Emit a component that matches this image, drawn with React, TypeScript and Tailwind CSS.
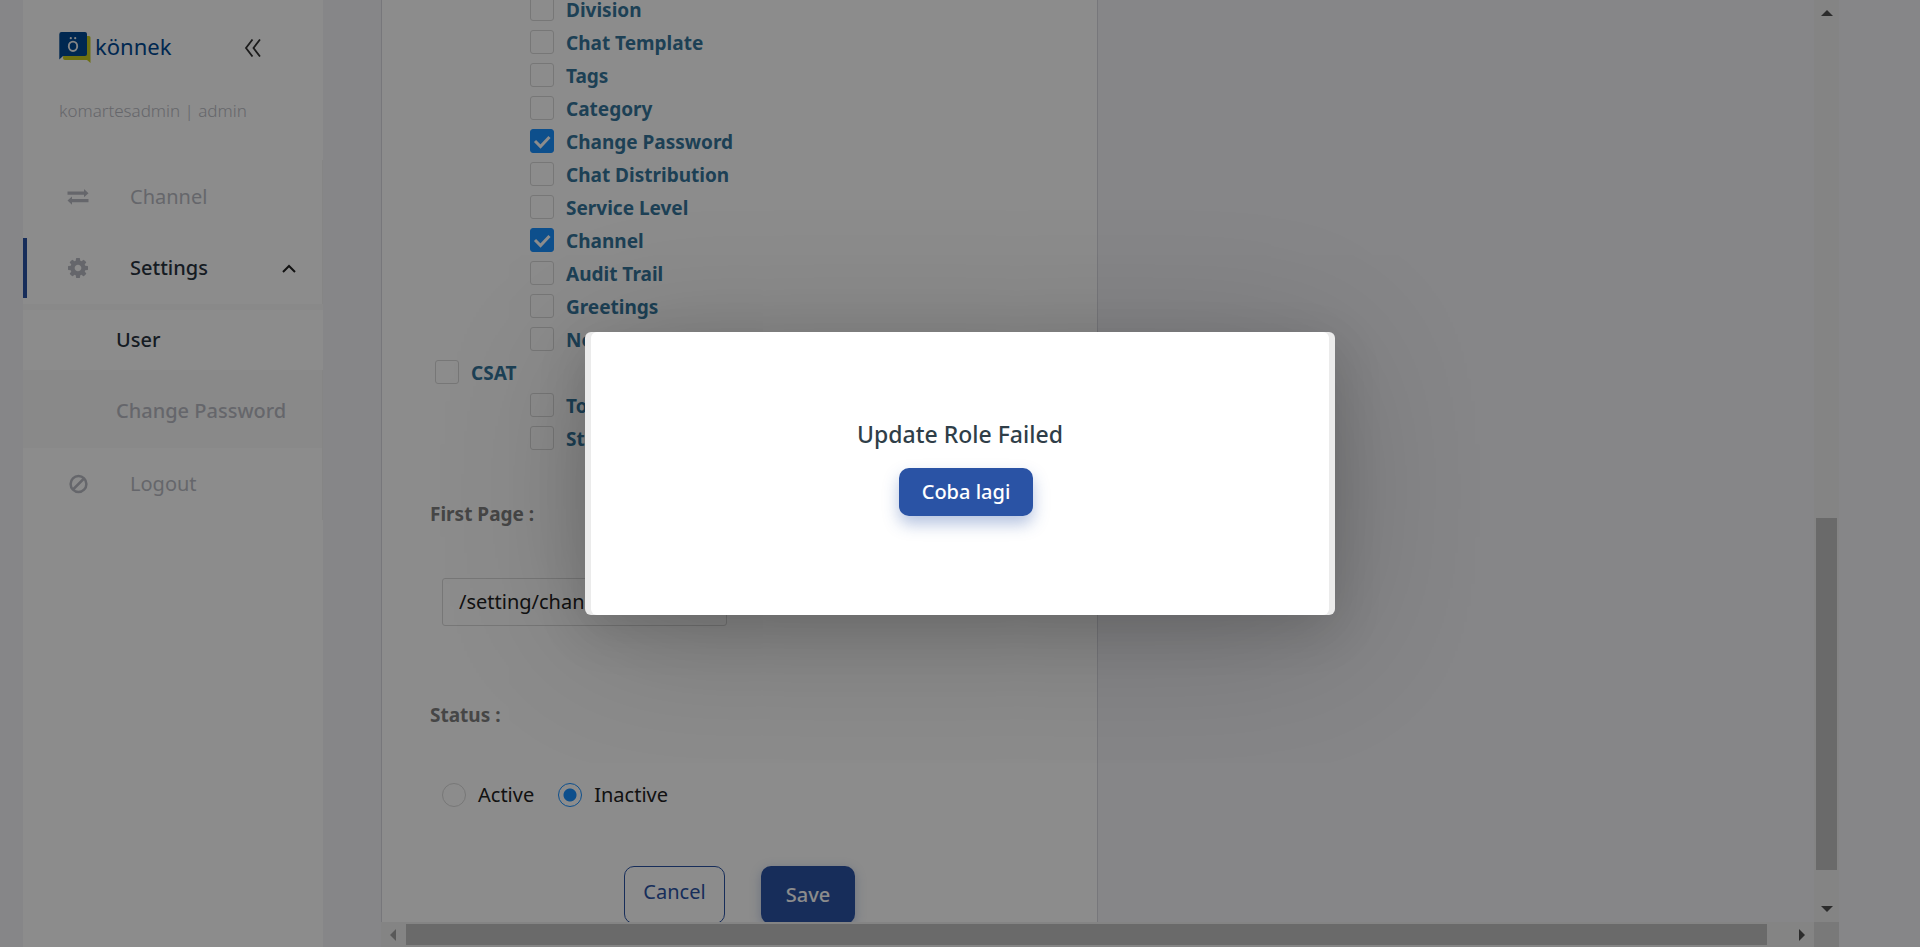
import React from "react";

type Role = { name: string; checked?: boolean; top?: boolean };

const roles: Role[] = [
  { name: "Division" },
  { name: "Chat Template" },
  { name: "Tags" },
  { name: "Category" },
  { name: "Change Password", checked: true },
  { name: "Chat Distribution" },
  { name: "Service Level" },
  { name: "Channel", checked: true },
  { name: "Audit Trail" },
  { name: "Greetings" },
  { name: "Notification" },
  { name: "CSAT", top: true },
  { name: "Token" },
  { name: "Status" },
];

function Logo() {
  return (
    <svg viewBox="0 0 32 32" className="h-8 w-8" aria-hidden="true">
      <path d="M6 4h24a1.500 1.500 0 0 1 1.500 1.500V31L28 28H6a2 2 0 0 1-2-2z" fill="#c8cc1e" />
      <path d="M2.500 0h23.500a2 2 0 0 1 2 2v20a2 2 0 0 1-2 2H4L.3 27.500V2.200A2.200 2.200 0 0 1 2.500 0z" fill="#004a94" />
      <ellipse cx="14" cy="14.300" rx="4.200" ry="4.700" fill="none" stroke="#f4f4f4" strokeWidth="1.900" />
      <circle cx="11.800" cy="6.200" r="1.100" fill="#f4f4f4" />
      <circle cx="16.200" cy="6.200" r="1.100" fill="#f4f4f4" />
    </svg>
  );
}

function SwapIcon() {
  return (
    <svg viewBox="0 0 22 16" className="h-4 w-[22px]" fill="currentColor" aria-hidden="true">
      <path d="M.5 2.500H17V0l4.500 4.200L17 8.200V5.800H.5z" />
      <path d="M21.500 10H5V7.500L.5 11.600 5 15.700v-2.500h16.500z" />
    </svg>
  );
}

function GearIcon() {
  return (
    <svg viewBox="0 0 1536 1536" className="h-5 w-5" fill="currentColor" aria-hidden="true">
      <path d="M1024 768q0-106-75-181t-181-75-181 75-75 181 75 181 181 75 181-75 75-181zm512-109v222q0 12-8 23t-20 13l-185 28q-19 54-39 91 35 50 107 138 10 12 10 25t-9 23q-27 37-99 108t-94 71q-12 0-26-9l-138-108q-44 23-91 38-16 136-29 186-7 28-36 28H657q-14 0-24.500-8.500T621 1506l-28-184q-49-16-90-37l-141 107q-10 9-25 9-14 0-25-11-126-114-165-168-7-10-7-23 0-12 8-23 15-21 51-66.500t54-70.500q-27-50-41-99L29 913q-13-2-21-12.500T0 877V655q0-12 8-23t19-13l186-28q14-46 39-92-40-57-107-138-10-12-10-24 0-10 9-23 26-36 98.500-107.500T337 135q13 0 26 10l138 107q44-23 91-38 16-136 29-186 7-28 36-28h222q14 0 24.500 8.500T915 30l28 184q49 16 90 37l142-107q9-9 24-9 13 0 25 10 129 119 165 170 7 8 7 22 0 12-8 23-15 21-51 66.500t-54 70.500q26 50 41 98l183 28q13 2 21 12.500t8 23.500z" />
    </svg>
  );
}

function BanIcon() {
  return (
    <svg viewBox="0 0 20 20" className="h-5 w-5" fill="none" stroke="currentColor" strokeWidth="2.500" aria-hidden="true">
      <circle cx="10.500" cy="10" r="7.900" />
      <path d="M5 15.500l11-11" />
    </svg>
  );
}

function Arrow({ d, light }: { d: string; light?: boolean }) {
  return (
    <svg viewBox="0 0 12 12" className="h-3 w-3" aria-hidden="true">
      <path d={d} fill={light ? "#a3a3a3" : "#505050"} />
    </svg>
  );
}

function Sidebar() {
  return (
    <aside className="ml-[23px] flex w-[300px] shrink-0 flex-col bg-white text-[#b9bbc3]">
      <div className="flex h-20 items-center pt-4 pl-9">
        <Logo />
        <span className="ml-1 w-20 pb-1 text-[22px] leading-7 text-[#004a94]">könnek</span>
        <button type="button" aria-label="Collapse menu" className="ml-[69px] text-[#333]">
          <svg viewBox="0 0 18 18" className="h-[18px] w-[18px]" fill="none" stroke="currentColor" strokeWidth="1.800">
            <path d="M8.500.5L2 9l6.500 8.500M16 .5L9.500 9l6.500 8.500" />
          </svg>
        </button>
      </div>
      <p className="flex h-20 items-start pt-[17px] pl-9 text-[17px] leading-7 font-[350]">komartesadmin | admin</p>
      <nav className="flex flex-col border-r border-[#f2f2f2] text-[20px] leading-6">
        <a href="#channel" className="flex h-[78px] items-center gap-[41px] pb-1 pl-11">
          <SwapIcon />
          Channel
        </a>
        <a href="#settings" className="flex h-[60px] items-center border-l-4 border-[#2a53a5] pl-[41px] text-[#28333f]">
          <span className="mr-[42px] text-[#b9bbc3]">
            <GearIcon />
          </span>
          <span className="w-[152px] font-medium">Settings</span>
          <svg viewBox="0 0 14 9" className="h-[9px] w-[14px]" fill="none" stroke="#222" strokeWidth="2" aria-hidden="true">
            <path d="M1 8l6-6 6 6" />
          </svg>
        </a>
        <div className="mt-1.5 -mr-px flex flex-col bg-[#fafafa] pt-1.5 font-medium">
          <a href="#user" className="flex h-[60px] items-center bg-white pl-[93px] text-[#28333f]">
            User
          </a>
          <a href="#password" className="flex h-[78px] items-center border-r border-[#f2f2f2] pt-1 pl-[93px]">
            Change Password
          </a>
        </div>
        <a href="#logout" className="flex h-[72px] items-center gap-[42px] pl-[45px]">
          <BanIcon />
          Logout
        </a>
      </nav>
    </aside>
  );
}

function RoleForm() {
  return (
    <form className="h-full w-[717px] shrink-0 overflow-hidden border-x border-[#d9d9e0] bg-white text-[19px] text-[#222]">
      <ul className="-mt-[7px] flex flex-col">
        {roles.map((role) => (
          <li key={role.name} className={role.top ? "h-[33px] pl-[53px]" : "h-[33px] pl-[148px]"}>
            <label className="flex items-start gap-3 pt-1 leading-[26px] font-bold text-[#35769b]">
              <span className="relative flex h-6 w-6 shrink-0 items-center justify-center">
                <input
                  type="checkbox"
                  defaultChecked={role.checked}
                  className="h-6 w-6 appearance-none rounded-[3px] border border-[#d9d9d9] bg-white checked:border-[#1890ff] checked:bg-[#1890ff]"
                />
                {role.checked && (
                  <svg viewBox="0 0 24 24" className="pointer-events-none absolute h-6 w-6" fill="none" stroke="#fff" strokeWidth="3" aria-hidden="true">
                    <path d="M5 12l5.500 5.500 9-9.500" />
                  </svg>
                )}
              </span>
              {role.name}
            </label>
          </li>
        ))}
      </ul>
      <label htmlFor="first-page" className="mt-[45px] ml-12 block leading-7 font-bold text-[#808080]">
        First Page :
      </label>
      <select
        id="first-page"
        className="mt-[50px] ml-[60px] block h-12 w-[285px] appearance-none rounded-[3px] border border-[#d9d9d9] bg-white px-4 text-[20px] text-[#222]"
      >
        <option>/setting/channel</option>
      </select>
      <fieldset className="mt-[75px]">
        <legend className="ml-12 leading-7 font-bold text-[#808080]">Status :</legend>
        <div className="mt-[52px] ml-[60px] flex h-7 items-center gap-6 text-[20px]">
          <label className="flex items-center gap-3">
            <input type="radio" name="status" className="h-6 w-6 appearance-none rounded-full border border-[#d9d9d9]" />
            Active
          </label>
          <label className="flex items-center gap-3">
            <input
              type="radio"
              name="status"
              defaultChecked
              className="h-6 w-6 appearance-none rounded-full border border-[#1890ff] bg-[radial-gradient(circle,#1890ff_6px,transparent_7px)]"
            />
            Inactive
          </label>
        </div>
      </fieldset>
      <div className="mt-[57px] ml-[242px] flex gap-9">
        <button type="button" className="h-[58px] w-[101px] rounded-[10px] border border-[#2a53a5] pb-1.5 text-[20px] text-[#2a53a5]">
          Cancel
        </button>
        <button type="submit" className="h-[58px] w-[94px] rounded-[10px] bg-[#2a53a5] text-[20px] font-medium text-white shadow-[0_3px_12px_rgba(42,83,165,0.3)]">
          Save
        </button>
      </div>
    </form>
  );
}

export default function App() {
  return (
    <div className="relative flex h-screen overflow-hidden bg-[#f4f4f7] font-['Noto_Sans',sans-serif]">
      <Sidebar />
      <div className="mr-[81px] ml-[58px] flex min-w-0 flex-1 flex-col">
        <div className="flex min-h-0 flex-1">
          <main className="min-w-0 flex-1 overflow-hidden">
            <RoleForm />
          </main>
          <div className="flex w-[25px] shrink-0 flex-col items-center bg-[#f1f1f1] py-[7px]">
            <Arrow d="M6 3l6 6H0z" />
            <div className="flex-1" />
            <div className="h-[352px] w-[21px] bg-[#c1c1c1]" />
            <div className="h-[33px]" />
            <Arrow d="M0 3h12L6 9z" />
          </div>
        </div>
        <div className="flex h-[25px] shrink-0">
          <div className="flex flex-1 items-center bg-[#f1f1f1] px-[6px]">
            <Arrow d="M9 0v12L3 6z" light />
            <div className="ml-[7px] h-[21px] flex-1 bg-[#c1c1c1]" />
            <div className="w-[29px]" />
            <Arrow d="M3 0v12l6-6z" />
          </div>
          <div className="w-[25px] bg-[#dcdcdc]" />
        </div>
      </div>
      <div className="absolute inset-0 flex items-center justify-center bg-black/45">
        <div
          role="dialog"
          aria-modal="true"
          aria-labelledby="dialog-title"
          className="h-[283px] w-[750px] rounded-md bg-[#ebebeb] px-1.5 shadow-[0_19px_150px_rgba(0,0,0,0.2),0_15px_50px_rgba(0,0,0,0.14)]"
        >
          <div className="flex h-full flex-col items-center rounded-md bg-white pt-[86px]">
            <h2 id="dialog-title" className="text-[23px] leading-8 font-medium text-[#2f3e48]">
              Update Role Failed
            </h2>
            <button
              type="button"
              className="mt-[18px] ml-3 h-12 w-[134px] rounded-[10px] bg-[#2a53a5] text-[20px] font-medium text-white shadow-[0_8px_16px_rgba(42,83,165,0.35)]"
            >
              Coba lagi
            </button>
          </div>
        </div>
      </div>
    </div>
  );
}
